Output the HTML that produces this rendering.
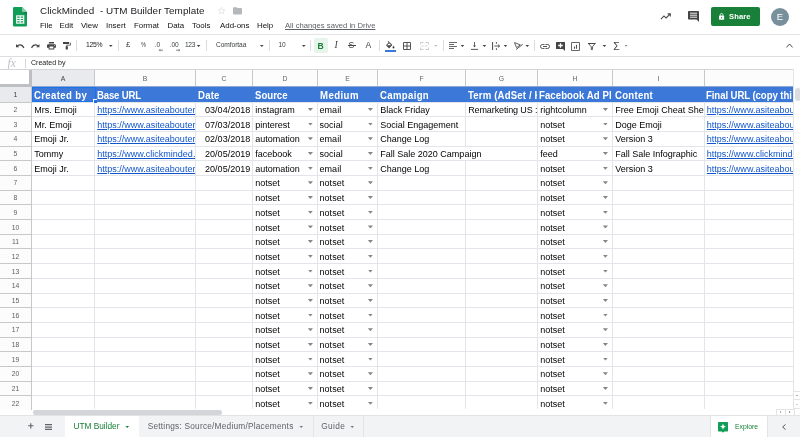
<!DOCTYPE html>
<html><head><meta charset="utf-8"><title>ClickMinded - UTM Builder Template</title>
<style>
html,body{margin:0;padding:0;}
body{width:800px;height:437px;overflow:hidden;position:relative;background:#fff;opacity:0.999;font-family:"Liberation Sans",Arial,sans-serif;color:#000;}
div,span{box-sizing:border-box;}
.abs{position:absolute;}
#top{position:absolute;left:0;top:0;width:800px;height:34px;will-change:transform;}
#title{position:absolute;left:40px;top:5px;font-size:9.9px;line-height:12px;color:#202124;white-space:pre;letter-spacing:0.05px;}
.menu{position:absolute;top:21px;font-size:7.9px;line-height:10px;color:#111;white-space:nowrap;}
#saved{color:#5f6368;text-decoration:underline;font-size:7.68px;}
#sharebg{position:absolute;left:711px;top:7px;width:49px;height:19px;border-radius:2px;background:#188038;}
#share{position:absolute;left:711px;top:7px;width:49px;height:19px;}
#share span{position:absolute;left:18px;top:0;line-height:19px;font-size:7.6px;font-weight:bold;color:#fff;letter-spacing:0.1px;}
#avatarbg{position:absolute;left:771px;top:7.5px;width:18px;height:18px;border-radius:9px;background:#78909c;}
#avatar{position:absolute;left:771px;top:7.5px;width:18px;height:18px;color:#fff;font-size:9.5px;line-height:18px;text-align:center;}
#toolbar{position:absolute;left:0;top:34px;width:800px;height:23px;border-top:1px solid #e3e4e6;border-bottom:1px solid #dcdee0;}
.tsep{position:absolute;top:5px;width:1px;height:11px;background:#dadce0;}
.tt{position:absolute;top:5px;line-height:10px;font-size:6.6px;letter-spacing:-0.05px;color:#3c4043;white-space:nowrap;}
.car{position:absolute;top:9.5px;width:4.6px;height:2.5px;background:#444;clip-path:polygon(0 0,100% 0,50% 100%);}
svg{position:absolute;overflow:visible;}
#fbar{position:absolute;left:0;top:57px;width:800px;height:12px;}
#fx{position:absolute;left:7.5px;top:0px;font-family:"Liberation Serif",serif;font-style:italic;font-size:11.5px;line-height:12px;color:#bcbfc3;}
#fsep{position:absolute;left:25px;top:2px;width:1px;height:9px;background:#d5d7da;}
#ftext{position:absolute;left:31px;top:0;font-size:7.05px;line-height:12px;color:#202124;}
#grid{position:absolute;left:0;top:0;width:800px;height:437px;}
#gridtext{position:absolute;left:0;top:0;width:800px;height:437px;will-change:transform;}
.colhead{position:absolute;left:0;top:69px;width:794px;height:18px;border-top:1px solid #d3d5d8;background:#f8f9fa;}
.ch{position:absolute;top:70px;height:17px;border-right:1px solid #c6c8ca;border-bottom:1px solid #c6c8ca;font-size:6.8px;line-height:8px;padding-top:5px;text-align:center;color:#5f6368;}
.chb{position:absolute;top:70px;height:17px;background:#fcfcfc;}
.chb.sel,.rhb.sel{background:#e8eaed;}
.ch.sel{color:#3c4043;}
.rh{position:absolute;left:0;width:32px;border-right:1px solid #c6c8ca;border-bottom:1px solid #c6c8ca;font-size:6.8px;line-height:8px;text-align:center;color:#5a5e63;}
.rhb{position:absolute;left:0;width:32px;background:#fcfcfc;}
.rh.sel{color:#3c4043;}
#corner{position:absolute;left:0;top:70px;width:32px;height:17px;background:#fff;border-right:3px solid #bdbfc2;border-bottom:3px solid #bdbfc2;}
.hrow{position:absolute;background:#3c78d8;}
.hl{position:absolute;left:32px;width:762px;height:1px;background:#e2e5e9;}
.vl{position:absolute;top:103px;width:1px;height:306px;background:#e2e5e9;}
.hc{position:absolute;overflow:hidden;white-space:nowrap;color:#fff;font-weight:bold;font-size:10.6px;line-height:10px;padding-top:3px;padding-left:2px;}
.hc span{display:inline-block;transform:scaleX(0.906);transform-origin:0 50%;}
.c{position:absolute;overflow:hidden;white-space:nowrap;font-size:9.03px;line-height:10px;padding-left:2.2px;color:#000;}
.c.r{text-align:right;padding-right:1.8px;padding-left:0;}
.c.lnk span{color:#1155cc;text-decoration:underline;}
.dd{position:absolute;width:5.2px;height:3px;background:#858585;clip-path:polygon(0 0,100% 0,50% 100%);}
#hscroll{position:absolute;left:32.5px;top:410.4px;width:189px;height:4.2px;border-radius:2.1px;background:#d3d5d8;}
#bottombg{position:absolute;left:0;top:415px;width:800px;height:22px;background:#f1f3f4;border-top:1px solid #e1e3e5;}
#bottom{position:absolute;left:0;top:416px;width:800px;height:21px;will-change:transform;}
.tab{position:absolute;top:0;height:21px;line-height:21px;font-size:8.3px;color:#5f6368;white-space:nowrap;}
#tab1bg{position:absolute;left:65px;top:416px;width:74px;height:21px;background:#fff;}
#tab1{left:65px;width:74px;color:#188038;padding-left:8.4px;}
.tcar{position:absolute;top:9.6px;width:4.5px;height:2.4px;background:#777;clip-path:polygon(0 0,100% 0,50% 100%);}
#explorebg{position:absolute;left:710px;top:416px;width:58px;height:21px;background:#fff;border-left:1px solid #e1e3e5;border-right:1px solid #e1e3e5;}
#explore{position:absolute;left:711px;top:0;width:57px;height:21px;}
#explore span{position:absolute;left:24px;top:0;line-height:21px;font-size:6.8px;color:#188038;}
#vscroll{position:absolute;left:793px;top:69px;width:7px;height:340px;background:#fff;border-left:1px solid #e4e5e7;}
#vthumb{position:absolute;left:795px;top:87.5px;width:6px;height:13.5px;border-radius:3px;background:#dadce0;}
</style></head><body>

<div id="top">
  <svg style="left:13px;top:7px" width="14" height="19.5" viewBox="0 0 14 19.5">
    <path d="M1.3 0 H9 L14 5 V18.2 A1.3 1.3 0 0 1 12.7 19.5 H1.3 A1.3 1.3 0 0 1 0 18.2 V1.3 A1.3 1.3 0 0 1 1.3 0 Z" fill="#0f9d58"/>
    <path d="M9 0 L14 5 H10.2 A1.2 1.2 0 0 1 9 3.8 Z" fill="#87ceac"/>
    <path d="M9.800 5 H14 V8.600 Z" fill="#0b7d43" opacity="0.75"/>
    <path d="M3.100 8.200 H11.300 V16.800 H3.100 Z M4.300 9.600 V10.800 H6.600 V9.600 Z M7.800 9.600 V10.800 H10.100 V9.600 Z M4.300 11.900 V13.100 H6.600 V11.900 Z M7.800 11.900 V13.100 H10.100 V11.900 Z M4.300 14.200 V15.400 H6.600 V14.200 Z M7.800 14.200 V15.400 H10.100 V14.200 Z" fill="#f1f8f4" fill-rule="evenodd"/>
  </svg>
  <div id="title">ClickMinded  - UTM Builder Template</div>
  <svg style="left:217px;top:6px" width="9" height="9" viewBox="0 0 24 24"><path d="M12 3.5l2.6 6 6.4.6-4.9 4.2 1.5 6.3L12 17.3 6.4 20.6l1.5-6.3L3 10.1l6.4-.6z" fill="none" stroke="#dcdee0" stroke-width="2"/></svg>
  <svg style="left:232.6px;top:6.8px" width="9" height="7.6" viewBox="0 0 20 16"><path d="M2 0h6l2 2h8a2 2 0 0 1 2 2v10a2 2 0 0 1-2 2H2a2 2 0 0 1-2-2V2a2 2 0 0 1 2-2z" fill="#b4b7bb"/></svg>
  <div class="menu" style="left:40px">File</div>
  <div class="menu" style="left:59.5px">Edit</div>
  <div class="menu" style="left:81px">View</div>
  <div class="menu" style="left:106px">Insert</div>
  <div class="menu" style="left:134px">Format</div>
  <div class="menu" style="left:167.5px">Data</div>
  <div class="menu" style="left:192px">Tools</div>
  <div class="menu" style="left:220px">Add-ons</div>
  <div class="menu" style="left:257px">Help</div>
  <div class="menu" id="saved" style="left:285px">All changes saved in Drive</div>
  <!-- trending -->
  <svg style="left:660px;top:13px" width="11.5" height="7" viewBox="0 0 12 8"><path d="M0.5 7 L4 3.4 L6.3 5.7 L11 1.2 M8.2 1 H11.2 V4" fill="none" stroke="#444" stroke-width="1.15"/></svg>
  <!-- comment -->
  <svg style="left:688px;top:11px" width="11" height="11" viewBox="0 0 11 11"><path d="M0 0.8 A0.8 0.8 0 0 1 0.8 0 H10.2 A0.8 0.8 0 0 1 11 0.8 V11 L8.6 8.6 H0.8 A0.8 0.8 0 0 1 0 7.8 Z" fill="#444"/><path d="M2 2.2h7M2 4.2h7M2 6.2h7" stroke="#fff" stroke-width="0.9"/></svg>
  <div id="sharebg"></div><div id="avatarbg"></div>
  <div id="share">
    <svg style="left:8.4px;top:6px" width="5.2" height="6.8" viewBox="0 0 6 8"><path d="M0.6 3 H5.4 A0.6 0.6 0 0 1 6 3.6 V7.4 A0.6 0.6 0 0 1 5.4 8 H0.6 A0.6 0.6 0 0 1 0 7.4 V3.6 A0.6 0.6 0 0 1 0.6 3 Z" fill="#fff"/><path d="M1.5 3.2 V2 A1.5 1.5 0 0 1 4.5 2 V3.2" fill="none" stroke="#fff" stroke-width="0.9"/><circle cx="3" cy="5.5" r="0.7" fill="#188038"/></svg>
    <span>Share</span>
  </div>
  <div id="avatar">E</div>
</div>

<div id="toolbar">
  <!-- undo -->
  <svg style="left:15.5px;top:8.6px" width="9" height="4.5" viewBox="0 0 10 5"><path d="M0 0 L0 3.6 L3.6 3.6 L2.2 2.3 C4.2 0.9 6.8 1.5 8.1 4.6 L9.4 4.2 C7.9 0.1 4 -0.6 1.3 1.4 Z" fill="#444"/></svg>
  <!-- redo -->
  <svg style="left:31.2px;top:8.6px" width="9" height="4.5" viewBox="0 0 10 5"><path d="M9.4 0 L9.4 3.6 L5.8 3.6 L7.2 2.3 C5.2 0.9 2.6 1.5 1.3 4.6 L0 4.2 C1.5 0.1 5.4 -0.6 8.1 1.4 Z" fill="#444"/></svg>
  <!-- print -->
  <svg style="left:46.7px;top:7.2px" width="8.9" height="7.4" viewBox="0 0 19 17" preserveAspectRatio="none"><path d="M4 0h11v3.5H4z M2.5 5h14A2.5 2.5 0 0 1 19 7.500V13h-3.500v4h-12v-4H0V7.500A2.500 2.500 0 0 1 2.500 5z M5.500 10.500v4.500h8v-4.500z" fill="#444" fill-rule="evenodd"/><circle cx="15.800" cy="8" r="1" fill="#fff"/></svg>
  <!-- paint format -->
  <svg style="left:63px;top:7.2px" width="7.8" height="7.6" viewBox="0 0 16 18" preserveAspectRatio="none"><path d="M0 0h12.500v5H0z M13.500 1.500H16v6.500H8.500v2H10v8H5.500v-8H7V6.500h7.500V3h-1z" fill="#444"/></svg>
  <div class="tsep" style="left:76.3px"></div>
  <div class="tt" style="left:86px;letter-spacing:-0.25px;font-size:6.8px;color:#222">125%</div>
  <div class="car" style="left:108.5px"></div>
  <div class="tsep" style="left:118px"></div>
  <div class="tt" style="left:126px;font-size:7.6px">£</div>
  <div class="tt" style="left:141.3px;font-size:7px;transform:scaleX(0.78);transform-origin:0 0">%</div>
  <div class="tt" style="left:154.6px">.0</div><svg style="left:159px;top:14px" width="4" height="2.4" viewBox="0 0 4 2.4"><path d="M0.3 1.2H4M1.4 0.1L0.3 1.2l1.1 1.1" fill="none" stroke="#555" stroke-width="0.7"/></svg>
  <div class="tt" style="left:169.6px">.00</div><svg style="left:176px;top:14px" width="4" height="2.4" viewBox="0 0 4 2.4"><path d="M0 1.2H3.7M2.600 0.1L3.700 1.2l-1.100 1.100" fill="none" stroke="#555" stroke-width="0.7"/></svg>
  <div class="tt" style="left:185px;letter-spacing:-0.35px">123</div>
  <div class="car" style="left:196.3px"></div>
  <div class="tsep" style="left:206px"></div>
  <div class="tt" style="left:216px">Comfortaa</div>
  <div class="car" style="left:259.500px"></div>
  <div class="tsep" style="left:269px"></div>
  <div class="tt" style="left:278.5px">10</div>
  <div class="car" style="left:301.500px"></div>
  <div class="tsep" style="left:310px"></div>
  <div class="abs" style="left:314px;top:3px;width:14px;height:15px;border-radius:2px;background:#e6f4ea"></div>
  <div class="tt" style="left:317.500px;font-size:8.6px;font-weight:bold;color:#188038;top:5.5px">B</div>
  <div class="tt" style="left:334.6px;font-size:9.6px;font-style:italic;font-family:'Liberation Serif',serif;top:5.3px;color:#444">I</div>
  <div class="tt" style="left:348.6px;font-size:8.6px;top:5.4px;color:#444">S</div><div class="abs" style="left:347.6px;top:10.4px;width:8px;height:0.8px;background:#444"></div>
  <div class="tt" style="left:365.5px;font-size:8.6px;top:5px;color:#444">A</div>
  <div class="tsep" style="left:379px"></div>
  <!-- fill -->
  <svg style="left:386px;top:6px" width="9" height="8" viewBox="0 0 18 16"><path d="M4.500 0l-1.200 1.200 2 2L0.800 7.700a1.100 1.100 0 0 0 0 1.600l4.600 4.600a1.100 1.100 0 0 0 1.600 0L12.800 8.100z M6.200 4.300l4.200 4.200H2z" fill="#444" fill-rule="evenodd"/><path d="M15 9.500s-2 2.200-2 3.500a2 2 0 0 0 4 0c0-1.300-2-3.500-2-3.500z" fill="#444"/></svg>
  <div class="abs" style="left:385px;top:15px;width:11px;height:2px;background:#3c78d8"></div>
  <!-- borders -->
  <svg style="left:403px;top:6.5px" width="8" height="8" viewBox="0 0 8 8"><path d="M0.500 0.500h7v7h-7z M4 0.500v7 M0.500 4h7" fill="none" stroke="#444" stroke-width="0.9"/></svg>
  <!-- merge (disabled) -->
  <svg style="left:419.500px;top:6.500px" width="9" height="8" viewBox="0 0 9 8"><path d="M0.500 2.500v-2h3 M5.500 0.500h3v2 M8.500 5.500v2h-3 M3.500 7.500h-3v-2 M1.500 4h2 M5.500 4h2" fill="none" stroke="#c4c7ca" stroke-width="0.9"/></svg>
  <div class="car" style="left:433.5px;background:#c4c7ca"></div>
  <div class="tsep" style="left:443px"></div>
  <!-- halign -->
  <svg style="left:449px;top:7px" width="8" height="7" viewBox="0 0 8 7"><path d="M0 0.500h8 M0 2.500h5 M0 4.500h8 M0 6.500h5" stroke="#444" stroke-width="0.8"/></svg>
  <div class="car" style="left:460.2px"></div>
  <!-- valign -->
  <svg style="left:470.500px;top:6.500px" width="7" height="8" viewBox="0 0 7 8"><path d="M3.500 0v5" fill="none" stroke="#444" stroke-width="0.8"/><path d="M2 3.600l1.500 1.700 1.500-1.700z" fill="#444"/><path d="M0 7.400h7" stroke="#444" stroke-width="0.9"/></svg>
  <div class="car" style="left:482.1px"></div>
  <!-- wrap -->
  <svg style="left:492px;top:6.500px" width="8" height="8" viewBox="0 0 8 8"><path d="M0.600 0v8" stroke="#444" stroke-width="1"/><path d="M2.400 4h5 M6 2.500l1.700 1.500-1.700 1.500" fill="none" stroke="#444" stroke-width="0.9"/><path d="M4.400 0v1.800 M4.400 6.200v1.800" stroke="#444" stroke-width="0.9"/></svg>
  <div class="car" style="left:503.2px"></div>
  <!-- rotate -->
  <svg style="left:513.500px;top:6.500px" width="9" height="8" viewBox="0 0 9 8"><path d="M0.500 0.600L6.300 2.900 2.500 5.600z" fill="none" stroke="#444" stroke-width="0.85" stroke-linejoin="round"/><path d="M2.100 7.500L8.700 2.300" stroke="#444" stroke-width="0.95"/></svg>
  <div class="car" style="left:525px"></div>
  <div class="tsep" style="left:534px"></div>
  <!-- link -->
  <svg style="left:539.500px;top:8.500px" width="10" height="5" viewBox="0 0 20 10"><path d="M9 1H5a4 4 0 0 0 0 8h4 M11 1h4a4 4 0 0 1 0 8h-4 M6 5h8" fill="none" stroke="#444" stroke-width="1.800"/></svg>
  <!-- comment add -->
  <svg style="left:555.8px;top:6.500px" width="9" height="9" viewBox="0 0 9 9"><path d="M0 0.600A0.600 0.600 0 0 1 0.600 0h7.800a0.600 0.600 0 0 1 0.600 0.600V9L7 7H0.600A0.600 0.600 0 0 1 0 6.400z" fill="#444"/><path d="M4.500 1.200v4.600 M2.200 3.500h4.600" stroke="#fff" stroke-width="1.3"/></svg>
  <!-- chart -->
  <svg style="left:571px;top:6.500px" width="9" height="9" viewBox="0 0 9 9"><path d="M0.500 0.500h8v8h-8z" fill="none" stroke="#555" stroke-width="0.9"/><path d="M3.500 6.800V4.600 M5.500 6.800V2.800" stroke="#555" stroke-width="1.1"/></svg>
  <!-- filter -->
  <svg style="left:588px;top:7.500px" width="8" height="7" viewBox="0 0 8 7"><path d="M0 0h7.600v1h-7.600z" fill="#444"/><path d="M0.700 0.800L3.300 3.800v2.800h1.100V3.800L6.900 0.800" fill="none" stroke="#444" stroke-width="0.9"/></svg>
  <div class="car" style="left:602.1px"></div>
  <div class="tt" style="left:613.3px;font-size:10.5px;top:6px;color:#444">Σ</div>
  <div class="car" style="left:624.4px;top:9.8px;width:3.4px;height:2px;background:#888"></div>
  <!-- collapse -->
  <svg style="left:785.500px;top:8px" width="7" height="5" viewBox="0 0 7 5"><path d="M0.400 4.400L3.500 1l3.100 3.400" fill="none" stroke="#444" stroke-width="1"/></svg>
</div>

<div id="fbar"><div id="fx">fx</div><div id="fsep"></div><div id="ftext">Created by</div></div>

<div id="grid">
<div class="colhead"></div>
<div class="chb sel" style="left:32px;width:63px"></div>
<div class="chb" style="left:95px;width:101px"></div>
<div class="chb" style="left:196px;width:57px"></div>
<div class="chb" style="left:253px;width:65px"></div>
<div class="chb" style="left:318px;width:60px"></div>
<div class="chb" style="left:378px;width:88px"></div>
<div class="chb" style="left:466px;width:72px"></div>
<div class="chb" style="left:538px;width:75px"></div>
<div class="chb" style="left:613px;width:92px"></div>
<div class="chb" style="left:705px;width:89px"></div>
<div class="rhb sel" style="top:87px;height:16px"></div>
<div class="rhb" style="top:103px;height:14px"></div>
<div class="rhb" style="top:117px;height:15px"></div>
<div class="rhb" style="top:132px;height:15px"></div>
<div class="rhb" style="top:147px;height:14px"></div>
<div class="rhb" style="top:161px;height:15px"></div>
<div class="rhb" style="top:176px;height:15px"></div>
<div class="rhb" style="top:191px;height:14px"></div>
<div class="rhb" style="top:205px;height:15px"></div>
<div class="rhb" style="top:220px;height:15px"></div>
<div class="rhb" style="top:235px;height:14px"></div>
<div class="rhb" style="top:249px;height:15px"></div>
<div class="rhb" style="top:264px;height:15px"></div>
<div class="rhb" style="top:279px;height:15px"></div>
<div class="rhb" style="top:294px;height:14px"></div>
<div class="rhb" style="top:308px;height:15px"></div>
<div class="rhb" style="top:323px;height:15px"></div>
<div class="rhb" style="top:338px;height:14px"></div>
<div class="rhb" style="top:352px;height:15px"></div>
<div class="rhb" style="top:367px;height:15px"></div>
<div class="rhb" style="top:382px;height:14px"></div>
<div class="rhb" style="top:396px;height:14px"></div>
<div class="hrow" style="top:87px;height:15px;left:32px;width:761px"></div>
<div class="hl" style="top:102px"></div>
<div class="hl" style="top:116px"></div>
<div class="hl" style="top:131px"></div>
<div class="hl" style="top:146px"></div>
<div class="hl" style="top:160px"></div>
<div class="hl" style="top:175px"></div>
<div class="hl" style="top:190px"></div>
<div class="hl" style="top:204px"></div>
<div class="hl" style="top:219px"></div>
<div class="hl" style="top:234px"></div>
<div class="hl" style="top:248px"></div>
<div class="hl" style="top:263px"></div>
<div class="hl" style="top:278px"></div>
<div class="hl" style="top:293px"></div>
<div class="hl" style="top:307px"></div>
<div class="hl" style="top:322px"></div>
<div class="hl" style="top:337px"></div>
<div class="hl" style="top:351px"></div>
<div class="hl" style="top:366px"></div>
<div class="hl" style="top:381px"></div>
<div class="hl" style="top:395px"></div>
<div class="vl" style="left:94px"></div>
<div class="vl" style="left:195px"></div>
<div class="vl" style="left:252px"></div>
<div class="vl" style="left:317px"></div>
<div class="vl" style="left:377px"></div>
<div class="vl" style="left:465px"></div>
<div class="vl" style="left:537px"></div>
<div class="vl" style="left:612px"></div>
<div class="vl" style="left:704px"></div>
<div class="dd" style="left:307.8px;top:107.9px"></div>
<div class="dd" style="left:367.8px;top:107.9px"></div>
<div class="dd" style="left:602.8px;top:107.9px"></div>
<div class="dd" style="left:307.8px;top:122.6px"></div>
<div class="dd" style="left:367.8px;top:122.6px"></div>
<div class="dd" style="left:602.8px;top:122.6px"></div>
<div class="dd" style="left:307.8px;top:137.3px"></div>
<div class="dd" style="left:367.8px;top:137.3px"></div>
<div class="dd" style="left:602.8px;top:137.3px"></div>
<div class="dd" style="left:307.8px;top:152.0px"></div>
<div class="dd" style="left:367.8px;top:152.0px"></div>
<div class="abs" style="left:465px;top:147px;width:1px;height:13px;background:#fff"></div>
<div class="dd" style="left:602.8px;top:152.0px"></div>
<div class="dd" style="left:307.8px;top:166.7px"></div>
<div class="dd" style="left:367.8px;top:166.7px"></div>
<div class="dd" style="left:602.8px;top:166.7px"></div>
<div class="dd" style="left:307.8px;top:181.3px"></div>
<div class="dd" style="left:367.8px;top:181.3px"></div>
<div class="dd" style="left:602.8px;top:181.3px"></div>
<div class="dd" style="left:307.8px;top:196.0px"></div>
<div class="dd" style="left:367.8px;top:196.0px"></div>
<div class="dd" style="left:602.8px;top:196.0px"></div>
<div class="dd" style="left:307.8px;top:210.7px"></div>
<div class="dd" style="left:367.8px;top:210.7px"></div>
<div class="dd" style="left:602.8px;top:210.7px"></div>
<div class="dd" style="left:307.8px;top:225.4px"></div>
<div class="dd" style="left:367.8px;top:225.4px"></div>
<div class="dd" style="left:602.8px;top:225.4px"></div>
<div class="dd" style="left:307.8px;top:240.1px"></div>
<div class="dd" style="left:367.8px;top:240.1px"></div>
<div class="dd" style="left:602.8px;top:240.1px"></div>
<div class="dd" style="left:307.8px;top:254.8px"></div>
<div class="dd" style="left:367.8px;top:254.8px"></div>
<div class="dd" style="left:602.8px;top:254.8px"></div>
<div class="dd" style="left:307.8px;top:269.5px"></div>
<div class="dd" style="left:367.8px;top:269.5px"></div>
<div class="dd" style="left:602.8px;top:269.5px"></div>
<div class="dd" style="left:307.8px;top:284.2px"></div>
<div class="dd" style="left:367.8px;top:284.2px"></div>
<div class="dd" style="left:602.8px;top:284.2px"></div>
<div class="dd" style="left:307.8px;top:298.9px"></div>
<div class="dd" style="left:367.8px;top:298.9px"></div>
<div class="dd" style="left:602.8px;top:298.9px"></div>
<div class="dd" style="left:307.8px;top:313.6px"></div>
<div class="dd" style="left:367.8px;top:313.6px"></div>
<div class="dd" style="left:602.8px;top:313.6px"></div>
<div class="dd" style="left:307.8px;top:328.2px"></div>
<div class="dd" style="left:367.8px;top:328.2px"></div>
<div class="dd" style="left:602.8px;top:328.2px"></div>
<div class="dd" style="left:307.8px;top:342.9px"></div>
<div class="dd" style="left:367.8px;top:342.9px"></div>
<div class="dd" style="left:602.8px;top:342.9px"></div>
<div class="dd" style="left:307.8px;top:357.6px"></div>
<div class="dd" style="left:367.8px;top:357.6px"></div>
<div class="dd" style="left:602.8px;top:357.6px"></div>
<div class="dd" style="left:307.8px;top:372.3px"></div>
<div class="dd" style="left:367.8px;top:372.3px"></div>
<div class="dd" style="left:602.8px;top:372.3px"></div>
<div class="dd" style="left:307.8px;top:387.0px"></div>
<div class="dd" style="left:367.8px;top:387.0px"></div>
<div class="dd" style="left:602.8px;top:387.0px"></div>
<div class="dd" style="left:307.8px;top:401.7px"></div>
<div class="dd" style="left:367.8px;top:401.7px"></div>
<div class="dd" style="left:602.8px;top:401.7px"></div>
</div>
<div id="gridtext">
<div class="ch sel" style="left:32px;width:63px">A</div>
<div class="ch" style="left:95px;width:101px">B</div>
<div class="ch" style="left:196px;width:57px">C</div>
<div class="ch" style="left:253px;width:65px">D</div>
<div class="ch" style="left:318px;width:60px">E</div>
<div class="ch" style="left:378px;width:88px">F</div>
<div class="ch" style="left:466px;width:72px">G</div>
<div class="ch" style="left:538px;width:75px">H</div>
<div class="ch" style="left:613px;width:92px">I</div>
<div class="ch" style="left:705px;width:89px"></div>
<div class="rh sel" style="top:87px;height:16px;padding-top:4px">1</div>
<div class="rh" style="top:103px;height:14px;padding-top:3px">2</div>
<div class="rh" style="top:117px;height:15px;padding-top:4px">3</div>
<div class="rh" style="top:132px;height:15px;padding-top:3px">4</div>
<div class="rh" style="top:147px;height:14px;padding-top:3px">5</div>
<div class="rh" style="top:161px;height:15px;padding-top:4px">6</div>
<div class="rh" style="top:176px;height:15px;padding-top:3px">7</div>
<div class="rh" style="top:191px;height:14px;padding-top:3px">8</div>
<div class="rh" style="top:205px;height:15px;padding-top:4px">9</div>
<div class="rh" style="top:220px;height:15px;padding-top:4px">10</div>
<div class="rh" style="top:235px;height:14px;padding-top:3px">11</div>
<div class="rh" style="top:249px;height:15px;padding-top:4px">12</div>
<div class="rh" style="top:264px;height:15px;padding-top:4px">13</div>
<div class="rh" style="top:279px;height:15px;padding-top:3px">14</div>
<div class="rh" style="top:294px;height:14px;padding-top:3px">15</div>
<div class="rh" style="top:308px;height:15px;padding-top:4px">16</div>
<div class="rh" style="top:323px;height:15px;padding-top:3px">17</div>
<div class="rh" style="top:338px;height:14px;padding-top:3px">18</div>
<div class="rh" style="top:352px;height:15px;padding-top:4px">19</div>
<div class="rh" style="top:367px;height:15px;padding-top:3px">20</div>
<div class="rh" style="top:382px;height:14px;padding-top:3px">21</div>
<div class="rh" style="top:396px;height:14px;border-bottom:0;padding-top:4px">22</div>
<div class="hc" style="left:32px;width:63px;top:87px;height:15px;padding-left:1.5px;letter-spacing:0.386px"><span>Created by</span></div>
<div class="hc" style="left:95px;width:101px;top:87px;height:15px;padding-left:2.4px;letter-spacing:-0.210px"><span>Base URL</span></div>
<div class="hc" style="left:196px;width:57px;top:87px;height:15px;padding-left:2.2px;letter-spacing:0.221px"><span>Date</span></div>
<div class="hc" style="left:253px;width:65px;top:87px;height:15px;padding-left:2.4px;letter-spacing:0.000px"><span>Source</span></div>
<div class="hc" style="left:318px;width:60px;top:87px;height:15px;padding-left:1.5px;letter-spacing:0.475px"><span>Medium</span></div>
<div class="hc" style="left:378px;width:88px;top:87px;height:15px;padding-left:2.2px;letter-spacing:0.364px"><span>Campaign</span></div>
<div class="hc" style="left:466px;width:70.5px;top:87px;height:15px;padding-left:2.3px;letter-spacing:0.177px"><span>Term (AdSet / K</span></div>
<div class="hc" style="left:538px;width:75px;top:87px;height:15px;padding-left:1.4px;letter-spacing:0.083px"><span>Facebook Ad Pl</span></div>
<div class="hc" style="left:613px;width:92px;top:87px;height:15px;padding-left:2px;letter-spacing:0.287px"><span>Content</span></div>
<div class="hc" style="left:705px;width:88px;top:87px;height:15px;padding-left:0.8px;letter-spacing:-0.088px"><span>Final URL (copy thi</span></div>
<div class="c" style="left:32px;width:62px;top:103px;height:13px;padding-top:2.00px;"><span>Mrs. Emoji</span></div>
<div class="c lnk" style="left:95px;width:100px;top:103px;height:13px;padding-top:2.00px;"><span>https://www.asiteabouter</span></div>
<div class="c r" style="left:196px;width:56px;top:103px;height:13px;padding-top:2.00px;"><span>03/04/2018</span></div>
<div class="c" style="left:253px;width:64px;top:103px;height:13px;padding-top:2.00px;"><span>instagram</span></div>
<div class="c" style="left:318px;width:59px;top:103px;height:13px;padding-top:2.00px;padding-left:1.6px;"><span>email</span></div>
<div class="c" style="left:378px;width:87px;top:103px;height:13px;padding-top:2.00px;"><span>Black Friday</span></div>
<div class="c" style="left:466px;width:71px;top:103px;height:13px;padding-top:2.00px;letter-spacing:-0.12px;"><span>Remarketing US :</span></div>
<div class="c" style="left:538px;width:74px;top:103px;height:13px;padding-top:2.00px;"><span>rightcolumn</span></div>
<div class="c" style="left:613px;width:91px;top:103px;height:13px;padding-top:2.00px;"><span>Free Emoji Cheat She</span></div>
<div class="c lnk" style="left:705px;width:88px;top:103px;height:13px;padding-top:2.00px;padding-left:1.8px;"><span>https://www.asiteabou</span></div>
<div class="c" style="left:32px;width:62px;top:117px;height:14px;padding-top:3.00px;"><span>Mr. Emoji</span></div>
<div class="c lnk" style="left:95px;width:100px;top:117px;height:14px;padding-top:3.00px;"><span>https://www.asiteabouter</span></div>
<div class="c r" style="left:196px;width:56px;top:117px;height:14px;padding-top:3.00px;"><span>07/03/2018</span></div>
<div class="c" style="left:253px;width:64px;top:117px;height:14px;padding-top:3.00px;"><span>pinterest</span></div>
<div class="c" style="left:318px;width:59px;top:117px;height:14px;padding-top:3.00px;padding-left:1.6px;"><span>social</span></div>
<div class="c" style="left:378px;width:87px;top:117px;height:14px;padding-top:3.00px;"><span>Social Engagement</span></div>
<div class="c" style="left:538px;width:74px;top:117px;height:14px;padding-top:3.00px;"><span>notset</span></div>
<div class="c" style="left:613px;width:91px;top:117px;height:14px;padding-top:3.00px;"><span>Doge Emoji</span></div>
<div class="c lnk" style="left:705px;width:88px;top:117px;height:14px;padding-top:3.00px;padding-left:1.8px;"><span>https://www.asiteabou</span></div>
<div class="c" style="left:32px;width:62px;top:132px;height:14px;padding-top:2.00px;"><span>Emoji Jr.</span></div>
<div class="c lnk" style="left:95px;width:100px;top:132px;height:14px;padding-top:2.00px;"><span>https://www.asiteabouter</span></div>
<div class="c r" style="left:196px;width:56px;top:132px;height:14px;padding-top:2.00px;"><span>02/03/2018</span></div>
<div class="c" style="left:253px;width:64px;top:132px;height:14px;padding-top:2.00px;"><span>automation</span></div>
<div class="c" style="left:318px;width:59px;top:132px;height:14px;padding-top:2.00px;padding-left:1.6px;"><span>email</span></div>
<div class="c" style="left:378px;width:87px;top:132px;height:14px;padding-top:2.00px;"><span>Change Log</span></div>
<div class="c" style="left:538px;width:74px;top:132px;height:14px;padding-top:2.00px;"><span>notset</span></div>
<div class="c" style="left:613px;width:91px;top:132px;height:14px;padding-top:2.00px;"><span>Version 3</span></div>
<div class="c lnk" style="left:705px;width:88px;top:132px;height:14px;padding-top:2.00px;padding-left:1.8px;"><span>https://www.asiteabou</span></div>
<div class="c" style="left:32px;width:62px;top:147px;height:13px;padding-top:2.00px;"><span>Tommy</span></div>
<div class="c lnk" style="left:95px;width:100px;top:147px;height:13px;padding-top:2.00px;"><span>https://www.clickminded.</span></div>
<div class="c r" style="left:196px;width:56px;top:147px;height:13px;padding-top:2.00px;"><span>20/05/2019</span></div>
<div class="c" style="left:253px;width:64px;top:147px;height:13px;padding-top:2.00px;"><span>facebook</span></div>
<div class="c" style="left:318px;width:59px;top:147px;height:13px;padding-top:2.00px;padding-left:1.6px;"><span>social</span></div>
<div class="c" style="left:378px;width:150px;top:147px;height:13px;padding-top:2.00px;z-index:3;"><span>Fall Sale 2020 Campaign</span></div>
<div class="c" style="left:538px;width:74px;top:147px;height:13px;padding-top:2.00px;"><span>feed</span></div>
<div class="c" style="left:613px;width:91px;top:147px;height:13px;padding-top:2.00px;"><span>Fall Sale Infographic</span></div>
<div class="c lnk" style="left:705px;width:88px;top:147px;height:13px;padding-top:2.00px;padding-left:1.8px;"><span>https://www.clickminde</span></div>
<div class="c" style="left:32px;width:62px;top:161px;height:14px;padding-top:3.00px;"><span>Emoji Jr.</span></div>
<div class="c lnk" style="left:95px;width:100px;top:161px;height:14px;padding-top:3.00px;"><span>https://www.asiteabouter</span></div>
<div class="c r" style="left:196px;width:56px;top:161px;height:14px;padding-top:3.00px;"><span>20/05/2019</span></div>
<div class="c" style="left:253px;width:64px;top:161px;height:14px;padding-top:3.00px;"><span>automation</span></div>
<div class="c" style="left:318px;width:59px;top:161px;height:14px;padding-top:3.00px;padding-left:1.6px;"><span>email</span></div>
<div class="c" style="left:378px;width:87px;top:161px;height:14px;padding-top:3.00px;"><span>Change Log</span></div>
<div class="c" style="left:538px;width:74px;top:161px;height:14px;padding-top:3.00px;"><span>notset</span></div>
<div class="c" style="left:613px;width:91px;top:161px;height:14px;padding-top:3.00px;"><span>Version 3</span></div>
<div class="c lnk" style="left:705px;width:88px;top:161px;height:14px;padding-top:3.00px;padding-left:1.8px;"><span>https://www.asiteabou</span></div>
<div class="c" style="left:253px;width:64px;top:176px;height:14px;padding-top:2.00px;"><span>notset</span></div>
<div class="c" style="left:318px;width:59px;top:176px;height:14px;padding-top:2.00px;padding-left:1.6px;"><span>notset</span></div>
<div class="c" style="left:538px;width:74px;top:176px;height:14px;padding-top:2.00px;"><span>notset</span></div>
<div class="c" style="left:253px;width:64px;top:191px;height:13px;padding-top:2.00px;"><span>notset</span></div>
<div class="c" style="left:318px;width:59px;top:191px;height:13px;padding-top:2.00px;padding-left:1.6px;"><span>notset</span></div>
<div class="c" style="left:538px;width:74px;top:191px;height:13px;padding-top:2.00px;"><span>notset</span></div>
<div class="c" style="left:253px;width:64px;top:205px;height:14px;padding-top:3.00px;"><span>notset</span></div>
<div class="c" style="left:318px;width:59px;top:205px;height:14px;padding-top:3.00px;padding-left:1.6px;"><span>notset</span></div>
<div class="c" style="left:538px;width:74px;top:205px;height:14px;padding-top:3.00px;"><span>notset</span></div>
<div class="c" style="left:253px;width:64px;top:220px;height:14px;padding-top:3.00px;"><span>notset</span></div>
<div class="c" style="left:318px;width:59px;top:220px;height:14px;padding-top:3.00px;padding-left:1.6px;"><span>notset</span></div>
<div class="c" style="left:538px;width:74px;top:220px;height:14px;padding-top:3.00px;"><span>notset</span></div>
<div class="c" style="left:253px;width:64px;top:235px;height:13px;padding-top:2.00px;"><span>notset</span></div>
<div class="c" style="left:318px;width:59px;top:235px;height:13px;padding-top:2.00px;padding-left:1.6px;"><span>notset</span></div>
<div class="c" style="left:538px;width:74px;top:235px;height:13px;padding-top:2.00px;"><span>notset</span></div>
<div class="c" style="left:253px;width:64px;top:249px;height:14px;padding-top:3.00px;"><span>notset</span></div>
<div class="c" style="left:318px;width:59px;top:249px;height:14px;padding-top:3.00px;padding-left:1.6px;"><span>notset</span></div>
<div class="c" style="left:538px;width:74px;top:249px;height:14px;padding-top:3.00px;"><span>notset</span></div>
<div class="c" style="left:253px;width:64px;top:264px;height:14px;padding-top:3.00px;"><span>notset</span></div>
<div class="c" style="left:318px;width:59px;top:264px;height:14px;padding-top:3.00px;padding-left:1.6px;"><span>notset</span></div>
<div class="c" style="left:538px;width:74px;top:264px;height:14px;padding-top:3.00px;"><span>notset</span></div>
<div class="c" style="left:253px;width:64px;top:279px;height:14px;padding-top:2.00px;"><span>notset</span></div>
<div class="c" style="left:318px;width:59px;top:279px;height:14px;padding-top:2.00px;padding-left:1.6px;"><span>notset</span></div>
<div class="c" style="left:538px;width:74px;top:279px;height:14px;padding-top:2.00px;"><span>notset</span></div>
<div class="c" style="left:253px;width:64px;top:294px;height:13px;padding-top:2.00px;"><span>notset</span></div>
<div class="c" style="left:318px;width:59px;top:294px;height:13px;padding-top:2.00px;padding-left:1.6px;"><span>notset</span></div>
<div class="c" style="left:538px;width:74px;top:294px;height:13px;padding-top:2.00px;"><span>notset</span></div>
<div class="c" style="left:253px;width:64px;top:308px;height:14px;padding-top:3.00px;"><span>notset</span></div>
<div class="c" style="left:318px;width:59px;top:308px;height:14px;padding-top:3.00px;padding-left:1.6px;"><span>notset</span></div>
<div class="c" style="left:538px;width:74px;top:308px;height:14px;padding-top:3.00px;"><span>notset</span></div>
<div class="c" style="left:253px;width:64px;top:323px;height:14px;padding-top:2.00px;"><span>notset</span></div>
<div class="c" style="left:318px;width:59px;top:323px;height:14px;padding-top:2.00px;padding-left:1.6px;"><span>notset</span></div>
<div class="c" style="left:538px;width:74px;top:323px;height:14px;padding-top:2.00px;"><span>notset</span></div>
<div class="c" style="left:253px;width:64px;top:338px;height:13px;padding-top:2.00px;"><span>notset</span></div>
<div class="c" style="left:318px;width:59px;top:338px;height:13px;padding-top:2.00px;padding-left:1.6px;"><span>notset</span></div>
<div class="c" style="left:538px;width:74px;top:338px;height:13px;padding-top:2.00px;"><span>notset</span></div>
<div class="c" style="left:253px;width:64px;top:352px;height:14px;padding-top:3.00px;"><span>notset</span></div>
<div class="c" style="left:318px;width:59px;top:352px;height:14px;padding-top:3.00px;padding-left:1.6px;"><span>notset</span></div>
<div class="c" style="left:538px;width:74px;top:352px;height:14px;padding-top:3.00px;"><span>notset</span></div>
<div class="c" style="left:253px;width:64px;top:367px;height:14px;padding-top:2.00px;"><span>notset</span></div>
<div class="c" style="left:318px;width:59px;top:367px;height:14px;padding-top:2.00px;padding-left:1.6px;"><span>notset</span></div>
<div class="c" style="left:538px;width:74px;top:367px;height:14px;padding-top:2.00px;"><span>notset</span></div>
<div class="c" style="left:253px;width:64px;top:382px;height:13px;padding-top:2.00px;"><span>notset</span></div>
<div class="c" style="left:318px;width:59px;top:382px;height:13px;padding-top:2.00px;padding-left:1.6px;"><span>notset</span></div>
<div class="c" style="left:538px;width:74px;top:382px;height:13px;padding-top:2.00px;"><span>notset</span></div>
<div class="c" style="left:253px;width:64px;top:396px;height:14px;padding-top:3.00px;"><span>notset</span></div>
<div class="c" style="left:318px;width:59px;top:396px;height:14px;padding-top:3.00px;padding-left:1.6px;"><span>notset</span></div>
<div class="c" style="left:538px;width:74px;top:396px;height:14px;padding-top:3.00px;"><span>notset</span></div>
</div>
<div class="abs" style="left:32px;top:86px;width:761px;height:1px;background:#8fa8d2"></div>
<div id="corner"></div>
<div class="abs" style="left:31.5px;top:86.6px;width:64px;height:15.2px;border:1.5px solid #1a73e8"></div>
<div class="abs" style="left:92.6px;top:99px;width:4.4px;height:3.8px;background:#fff"></div>
<div class="abs" style="left:93.6px;top:100px;width:3.4px;height:2.8px;background:#1a73e8"></div>
<div id="vscroll"></div>
<div id="vthumb"></div>
<div id="hscroll"></div>
<div class="abs" style="left:793px;top:391px;width:8px;height:9px;border:1px solid #e3e4e6;background:#fff"></div>
<div class="abs" style="left:793px;top:399px;width:8px;height:10px;border:1px solid #e3e4e6;background:#fff"></div>
<div class="abs" style="left:795.6px;top:394.5px;width:2.6px;height:1.5px;background:#9a9a9a;clip-path:polygon(50% 0,100% 100%,0 100%)"></div>
<div class="abs" style="left:795.6px;top:403.5px;width:2.6px;height:1.5px;background:#9a9a9a;clip-path:polygon(0 0,100% 0,50% 100%)"></div>
<div class="abs" style="left:776px;top:409px;width:10px;height:7px;border:1px solid #e3e4e6;background:#fff"></div>
<div class="abs" style="left:785px;top:409px;width:10px;height:7px;border:1px solid #e3e4e6;background:#fff"></div>
<div class="abs" style="left:779.6px;top:410.8px;width:1.8px;height:2.6px;background:#8a8a8a;clip-path:polygon(100% 0,100% 100%,0 50%)"></div>
<div class="abs" style="left:788.8px;top:410.8px;width:1.8px;height:2.6px;background:#8a8a8a;clip-path:polygon(0 0,100% 50%,0 100%)"></div>

<div id="bottombg"></div><div id="tab1bg"></div><div id="explorebg"></div>
<div id="bottom">
  <svg style="left:28.4px;top:7.2px" width="5.6" height="5.6" viewBox="0 0 7 7"><path d="M3.500 0.200v6.600 M0.200 3.500h6.600" stroke="#5f6368" stroke-width="1.4"/></svg>
  <svg style="left:45px;top:7.500px" width="7" height="6" viewBox="0 0 7 6"><path d="M0 0.600h7 M0 3h7 M0 5.400h7" stroke="#5f6368" stroke-width="1.25"/></svg>
  <div class="tab" id="tab1">UTM Builder</div>
  <div class="tcar" style="left:125px;background:#188038"></div>
  <div class="tab" style="left:147.7px;letter-spacing:0.22px">Settings: Source/Medium/Placements</div>
  <div class="tcar" style="left:299px"></div><div class="abs" style="left:313px;top:0;width:1px;height:21px;background:#e3e5e7"></div>
  <div class="tab" style="left:321.2px;letter-spacing:0.37px">Guide</div>
  <div class="tcar" style="left:350px"></div><div class="abs" style="left:363px;top:0;width:1px;height:21px;background:#e3e5e7"></div>
  <div id="explore">
    <svg style="left:7px;top:5.500px" width="10" height="11" viewBox="0 0 10 11"><path d="M0.700 0h8.600a0.700 0.700 0 0 1 0.700 0.700v8a0.700 0.700 0 0 1-0.700 0.700H6.200L5 10.800 3.800 9.400H0.700A0.700 0.700 0 0 1 0 8.700v-8A0.700 0.700 0 0 1 0.700 0z" fill="#0f9d58"/><path d="M5 1.700l0.900 2.100 2.100 0.900-2.100 0.900L5 7.700 4.100 5.600 2 4.700l2.100-0.900z" fill="#fff"/></svg>
    <span>Explore</span>
  </div>
  <svg style="left:782px;top:8px" width="4" height="6" viewBox="0 0 4 6"><path d="M3.500 0.400L0.700 3l2.800 2.600" fill="none" stroke="#444" stroke-width="0.9"/></svg>
</div>
</body></html>
